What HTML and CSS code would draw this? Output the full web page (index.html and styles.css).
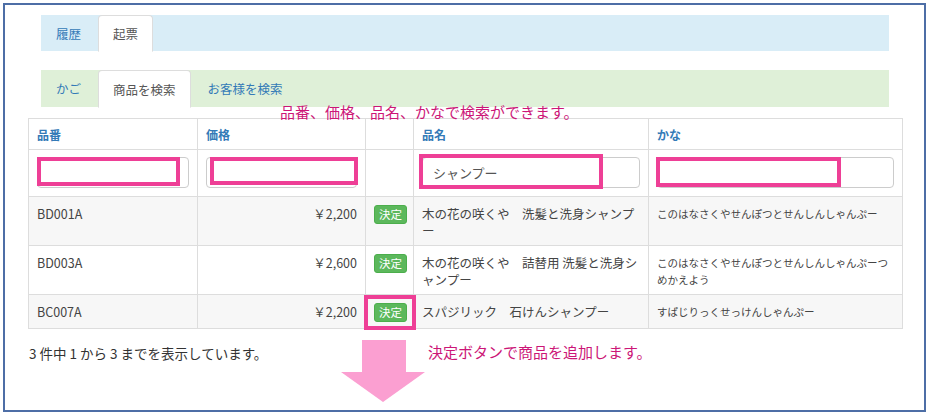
FILE: index.html
```html
<!DOCTYPE html>
<html lang="ja">
<head>
<meta charset="utf-8">
<title>商品を検索</title>
<link rel="stylesheet" href="styles.css">
</head>
<body>
<div class="frame">
  <nav class="tabs tabs-blue">
    <a class="tab">履歴</a>
    <a class="tab active">起票</a>
  </nav>
  <nav class="tabs tabs-green">
    <a class="tab">かご</a>
    <a class="tab active">商品を検索</a>
    <a class="tab">お客様を検索</a>
  </nav>
  <table class="grid">
    <colgroup>
      <col class="c-code"><col class="c-price"><col class="c-btn"><col class="c-name"><col class="c-kana">
    </colgroup>
    <thead>
      <tr class="head">
        <th>品番</th><th>価格</th><th></th><th>品名</th><th>かな</th>
      </tr>
      <tr class="filter">
        <td><div class="field"><input class="input" type="text"><span class="mark mark-code"></span></div></td>
        <td><div class="field"><input class="input" type="text"><span class="mark mark-price"></span></div></td>
        <td></td>
        <td><div class="field"><input class="input" type="text" value="シャンプー"><span class="mark mark-name"></span></div></td>
        <td><div class="field"><input class="input" type="text"><span class="mark mark-kana"></span></div></td>
      </tr>
    </thead>
    <tbody>
      <tr class="odd">
        <td>BD001A</td><td class="num">￥2,200</td><td><span class="btn">決定</span></td>
        <td>木の花の咲くや　洗髪と洗身シャンプー</td><td class="kana">このはなさくやせんぽつとせんしんしゃんぷー</td>
      </tr>
      <tr>
        <td>BD003A</td><td class="num">￥2,600</td><td><span class="btn">決定</span></td>
        <td>木の花の咲くや　詰替用 洗髪と洗身シャンプー</td><td class="kana">このはなさくやせんぽつとせんしんしゃんぷーつめかえよう</td>
      </tr>
      <tr class="odd">
        <td>BC007A</td><td class="num">￥2,200</td><td><span class="btn-wrap"><span class="btn">決定</span><span class="mark mark-btn"></span></span></td>
        <td>スパジリック　石けんシャンプー</td><td class="kana">すぱじりっくせっけんしゃんぷー</td>
      </tr>
    </tbody>
  </table>
  <p class="info">3 件中 1 から 3 までを表示しています。</p>

  <p class="note note-search">品番、価格、品名、かなで検索ができます。</p>
  <p class="note note-add">決定ボタンで商品を追加します。</p>
  <svg class="arrow" width="84" height="62" viewBox="0 0 84 62">
    <polygon points="21,0 65,0 65,32 84,32 42,62 0,32 21,32" fill="#fb9fd1"/>
  </svg>
</div>
</body>
</html>
```
FILE: styles.css
```css
* { box-sizing: border-box; }
html, body { margin: 0; padding: 0; background: #fff; }
body {
  font-family: "Noto Sans CJK JP", "Noto Sans", sans-serif;
  color: #333;
  font-size: 13px;
}
.frame {
  position: relative;
  margin: 3px;
  width: 923px;
  height: 409px;
  border: 2px solid #4d6ea6;
  padding: 10px 0 0 0;
}
.tabs {
  display: flex;
  margin-left: 36px;
  width: 848px;
}
.tabs-blue { height: 36px; background: #d9edf7; }
.tabs-green { height: 37px; background: #dff0d8; margin-top: 19px; }
.tab {
  display: flex;
  align-items: center;
  padding: 0 14px;
  margin-right: 2px;
  font-size: 12.5px;
  color: #337ab7;
  border: 1px solid transparent;
  border-radius: 4px 4px 0 0;
}
.tab.active {
  background: #fff;
  color: #555;
  border-color: #ddd #ddd transparent #ddd;
  margin-bottom: -1px;
}
.grid {
  margin: 11px 0 0 23px;
  width: 874px;
  table-layout: fixed;
  border-collapse: collapse;
}
.c-code { width: 169px; }
.c-price { width: 168px; }
.c-btn { width: 48px; }
.c-name { width: 235px; }
.c-kana { width: 254px; }
.grid th, .grid td {
  border: 1px solid #ddd;
  text-align: left;
  vertical-align: top;
  line-height: 17px;
  padding: 8px 8px 6px;
}
.grid th {
  font-size: 12px;
  font-weight: bold;
  color: #337ab7;
  padding: 7px 8px 6px;
}
.grid tr.filter td { padding: 7px 8px 8px; }
.grid tbody td { font-size: 12.5px; color: #444; }
.grid tbody td.kana { font-size: 10.5px; line-height: 17px; }
.grid tbody tr.odd td { background: #f7f7f7; }
.grid td.num { text-align: right; }
.field { position: relative; }
.input {
  display: block;
  width: 100%;
  height: 31px;
  border: 1px solid #ccc;
  border-radius: 4px;
  padding: 0 10px;
  font-family: inherit;
  font-size: 13px;
  color: #555;
  background: #fff;
}
.mark {
  position: absolute;
  border: 4px solid #ee3f96;
}
.mark-code { left: 0; top: 0; width: 143px; height: 29px; }
.mark-price { left: 4px; top: 0; width: 148px; height: 28px; }
.mark-name { left: -3px; top: -3px; width: 184px; height: 35px; }
.mark-kana { left: -1px; top: 0; width: 185px; height: 30px; }
.btn-wrap { position: relative; display: inline-block; vertical-align: top; }
.btn {
  display: inline-block;
  vertical-align: top;
  white-space: nowrap;
  background: #5cb85c;
  border: 1px solid #4cae4c;
  border-radius: 3px;
  color: #fff;
  font-size: 11.5px;
  line-height: 15px;
  padding: 1px 4px;
}
.mark-btn { left: -10px; top: -8px; width: 52px; height: 35px; }
.info {
  margin: 14px 0 0 24px;
  font-size: 13.5px;
  line-height: 20px;
  color: #333;
}
.note {
  position: absolute;
  margin: 0;
  font-size: 15px;
  line-height: 20px;
  color: #cc1677;
  white-space: nowrap;
}
.note-search { left: 275px; top: 97px; }
.note-add { left: 423px; top: 337px; }
.arrow { position: absolute; left: 336px; top: 335px; }
```
